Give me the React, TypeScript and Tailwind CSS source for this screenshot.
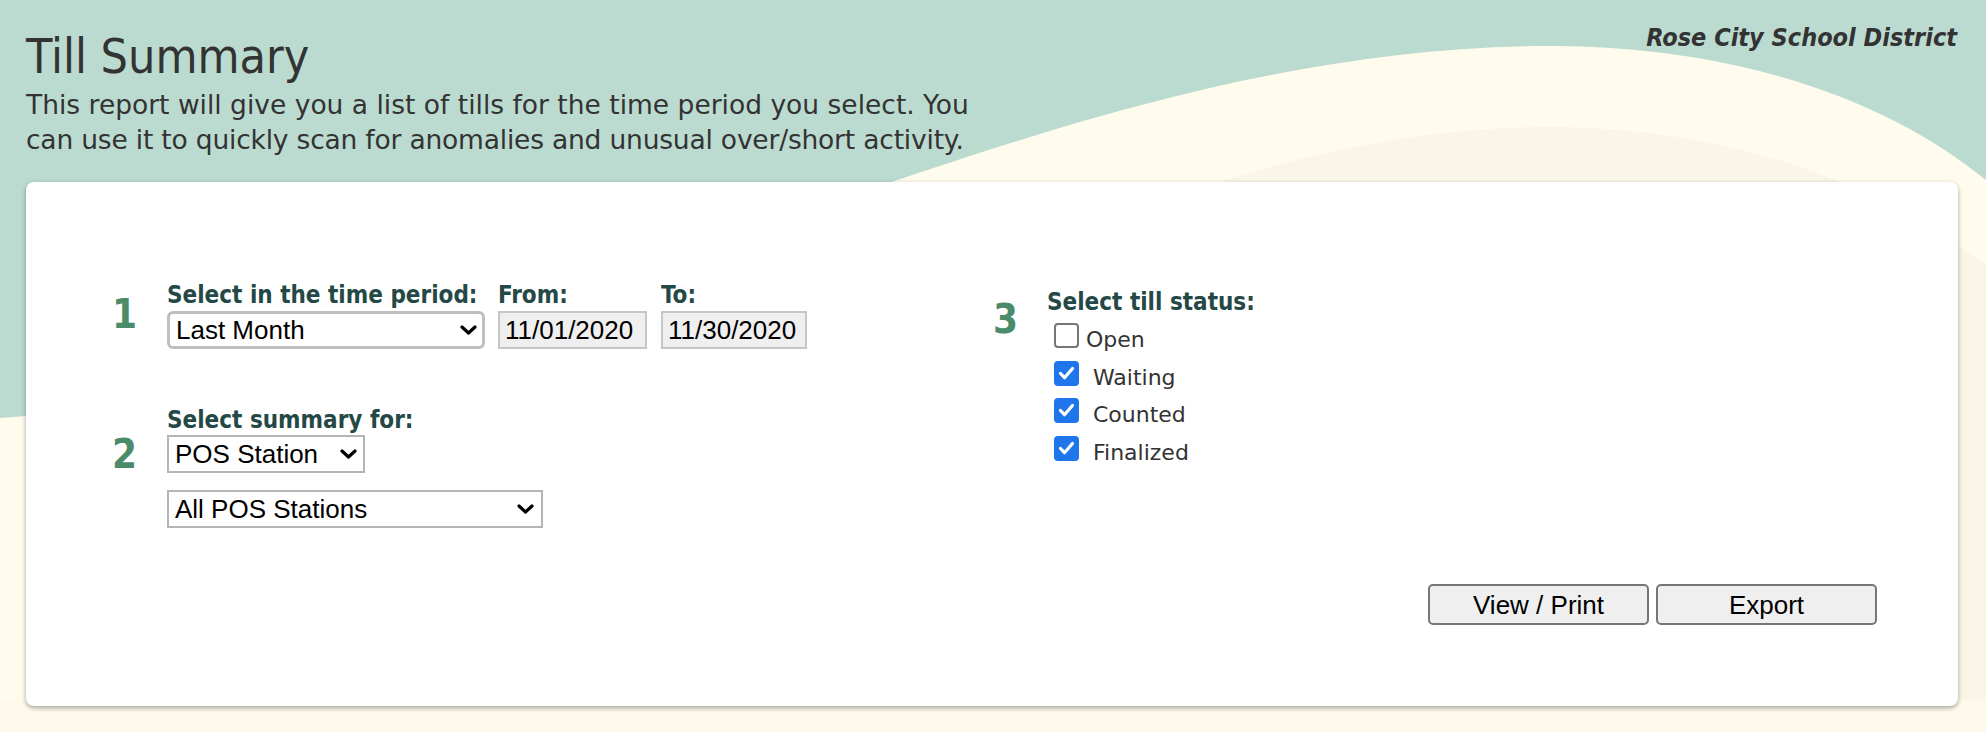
import React from "react";
import clsx from "clsx";

const labelCls =
  "whitespace-nowrap text-[24px] font-bold leading-[28px] text-[#244846]";
const numCls =
  "shrink-0 text-[40px] font-bold leading-[40px] text-[#4a8b6a]";
const arial = "font-['Liberation_Sans',Arial,sans-serif]";
const wide = "font-['DejaVu_Sans',sans-serif]";

function Chevron() {
  return (
    <svg width="17" height="10" viewBox="0 0 17 10" className="shrink-0">
      <path
        d="M2 2l6.5 6L15 2"
        fill="none"
        stroke="#000"
        strokeWidth="3.2"
        strokeLinecap="round"
        strokeLinejoin="round"
      />
    </svg>
  );
}

function FakeSelect({
  value,
  className,
}: {
  value: string;
  className?: string;
}) {
  return (
    <div
      className={clsx(
        "flex h-[38px] items-center justify-between bg-white text-[26px] text-black",
        arial,
        className
      )}
    >
      <span className="whitespace-nowrap">{value}</span>
      <Chevron />
    </div>
  );
}

function DateBox({ value, width }: { value: string; width: string }) {
  return (
    <div
      className={clsx(
        "mt-[2px] flex h-[38px] items-center border-2 border-[#c6c6c6] bg-[#efefef] pl-[5px] text-[26px] text-black",
        arial,
        width
      )}
    >
      {value}
    </div>
  );
}

function Check({ label, checked }: { label: string; checked: boolean }) {
  return (
    <div className="flex h-[37.7px] items-start">
      {checked ? (
        <span className="mt-[6px] flex h-[25px] w-[25px] shrink-0 items-center justify-center rounded-[4px] bg-[#1f75ea]">
          <svg width="25" height="25" viewBox="0 0 25 25">
            <path
              d="M6.5 12.5l4 4.2L18.5 7.5"
              fill="none"
              stroke="#fff"
              strokeWidth="3.2"
              strokeLinecap="round"
              strokeLinejoin="round"
            />
          </svg>
        </span>
      ) : (
        <span className="mt-[6px] h-[25px] w-[25px] shrink-0 rounded-[4px] border-2 border-[#767676] bg-white" />
      )}
      <span
        className={clsx(
          "mt-[10px] text-[22px] leading-[26px] text-[#333]",
          wide,
          checked ? "ml-[14px]" : "ml-[7px]"
        )}
      >
        {label}
      </span>
    </div>
  );
}

export default function App() {
  return (
    <div className="relative h-[732px] w-full overflow-hidden bg-[#bcdbd0] font-['DejaVu_Sans_Condensed','DejaVu_Sans',sans-serif] text-[#333]">
      {/* background waves */}
      <svg
        className="absolute inset-0 h-full w-full"
        viewBox="0 0 1986 732"
        preserveAspectRatio="none"
      >
        <path
          d="M0,418 C560,380 1030,44 1555,46 C1760,48 1900,110 1986,180 L1986,732 L0,732 Z"
          fill="#fffbed"
        />
        <path
          d="M0,780 C600,560 1030,125 1555,127 C1760,129 1900,200 1986,265 L1986,732 L0,732 Z"
          fill="#f9f6e7"
        />
        <path
          d="M0,700 C600,670 1300,670 1986,700 L1986,732 L0,732 Z"
          fill="#fdf9eb"
        />
      </svg>

      <div className="relative pl-[26px] pr-[28px] pt-[23px]">
        <header className="flex items-start justify-between">
          <div className="pt-[5px]">
            <h1 className="text-[48px] font-normal leading-[56px]">
              Till Summary
            </h1>
            <p className={clsx("mt-[3px] text-[26.5px] leading-[35px]", wide)}>
              <span className="block whitespace-nowrap">
                This report will give you a list of tills for the time period
                you select. You
              </span>
              <span className="block whitespace-nowrap tracking-[-0.2px]">
                can use it to quickly scan for anomalies and unusual
                over/short activity.
              </span>
            </p>
          </div>
          <div className="mr-[1px] whitespace-nowrap text-[25px] font-bold italic leading-[30px]">
            Rose City School District
          </div>
        </header>

        <main className="mt-[25px] h-[524px] rounded-[8px] bg-white pl-[86px] pr-[81px] pt-[99px] shadow-[0_2px_5px_rgba(0,0,0,0.35)]">
          <div className="flex">
            {/* steps 1 and 2 */}
            <div className="w-[881px] shrink-0">
              <div className="flex items-start">
                <div className={clsx(numCls, "mt-[13px] w-[55px]")}>1</div>
                <div className="flex flex-col">
                  <span className={labelCls}>Select in the time period:</span>
                  <FakeSelect
                    value="Last Month"
                    className="mt-[2px] w-[318px] rounded-[6px] border-[3px] border-[#bfbfbf] pl-[6px] pr-[5px]"
                  />
                </div>
                <div className="ml-[13px] flex flex-col">
                  <span className={labelCls}>From:</span>
                  <DateBox value="11/01/2020" width="w-[149px]" />
                </div>
                <div className="ml-[14px] flex flex-col">
                  <span className={labelCls}>To:</span>
                  <DateBox value="11/30/2020" width="w-[146px]" />
                </div>
              </div>

              <div className="mt-[57px] flex items-start">
                <div className={clsx(numCls, "mt-[28px] w-[55px]")}>2</div>
                <div className="flex flex-col">
                  <span className={labelCls}>Select summary for:</span>
                  <FakeSelect
                    value="POS Station"
                    className="mt-[1px] w-[198px] border-2 border-[#b5b5b5] pl-[6px] pr-[6px]"
                  />
                  <FakeSelect
                    value="All POS Stations"
                    className="mt-[17px] w-[376px] border-2 border-[#b5b5b5] pl-[6px] pr-[7px]"
                  />
                </div>
              </div>
            </div>

            {/* step 3 */}
            <div className="flex items-start pt-[7px]">
              <div className={clsx(numCls, "mt-[11px] w-[54px]")}>3</div>
              <div className="flex flex-col">
                <span className={labelCls}>Select till status:</span>
                <div className="ml-[7px] mt-[1px] flex flex-col">
                  <Check label="Open" checked={false} />
                  <Check label="Waiting" checked />
                  <Check label="Counted" checked />
                  <Check label="Finalized" checked />
                </div>
              </div>
            </div>
          </div>

          <div className="mt-[56px] flex justify-end gap-[7px]">
            <button
              className={clsx(
                "h-[41px] w-[221px] rounded-[5px] border-2 border-[#767676] bg-[#efefef] text-[26px] text-black",
                arial
              )}
            >
              View / Print
            </button>
            <button
              className={clsx(
                "h-[41px] w-[221px] rounded-[5px] border-2 border-[#767676] bg-[#efefef] text-[26px] text-black",
                arial
              )}
            >
              Export
            </button>
          </div>
        </main>
      </div>
    </div>
  );
}
